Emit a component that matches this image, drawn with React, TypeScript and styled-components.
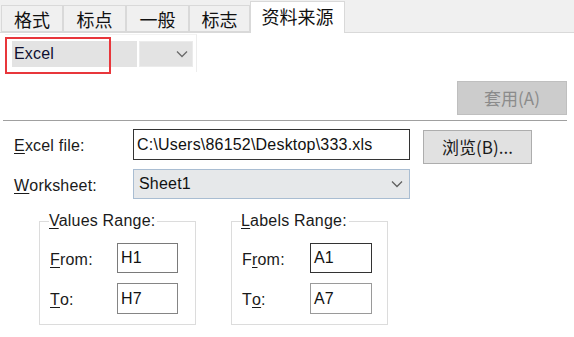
import React from "react";
import styled, { createGlobalStyle } from "styled-components";

const GlobalStyle = createGlobalStyle`
  html, body {
    margin: 0;
    padding: 0;
    background: #ffffff;
  }
  * {
    box-sizing: border-box;
  }
`;

const latin = `"Liberation Sans", "Noto Sans CJK SC", sans-serif`;
const cjk = `"Noto Sans CJK SC", "Liberation Sans", sans-serif`;

const Dialog = styled.div`
  width: 574px;
  height: 337px;
  overflow: hidden;
  background: #ffffff;
  font-family: ${latin};
  font-size: 16px;
  letter-spacing: 0.2px;
  color: #1a1a1a;
`;

const TabBar = styled.div`
  height: 33px;
  display: flex;
  align-items: flex-end;
  padding-left: 1px;
  background: #f0f0f0;
  border-bottom: 1px solid #d9d9d9;
`;

const Tab = styled.div<{ $active?: boolean; $width: number }>`
  width: ${({ $width }) => $width}px;
  height: ${({ $active }) => ($active ? 32 : 27)}px;
  margin-bottom: ${({ $active }) => ($active ? -1 : 0)}px;
  display: flex;
  align-items: center;
  justify-content: center;
  padding-bottom: ${({ $active }) => ($active ? 4 : 0)}px;
  font-family: ${cjk};
  font-size: 18px;
  line-height: 20px;
  letter-spacing: 0;
  color: #111;
  background: ${({ $active }) => ($active ? "#ffffff" : "#f0f0f0")};
  border: 1px solid #d9d9d9;
  border-bottom: ${({ $active }) => ($active ? "none" : "1px solid #d9d9d9")};
  & + & {
    border-left: ${({ $active }) => ($active ? "1px solid #d9d9d9" : "none")};
  }
`;

const SourceFrame = styled.div`
  position: relative;
  margin: 1px 0 0 5px;
  width: 192px;
  height: 38px;
  padding: 6px 0 0 7px;
  display: flex;
  gap: 2px;
  border-right: 1px solid #ededed;
  border-top: 1px solid #f3f3f3;
`;

const SourceValue = styled.div`
  width: 125px;
  height: 26px;
  background: #e3e3e3;
  display: flex;
  align-items: center;
  padding-left: 2px;
  color: #101030;
`;

const SourceArrow = styled.div`
  width: 54px;
  height: 26px;
  background: #e3e3e3;
  border: 1px solid #ebebeb;
  display: flex;
  align-items: center;
  justify-content: flex-end;
  padding-right: 4px;
`;

const Highlight = styled.div`
  position: absolute;
  left: 0;
  top: 2px;
  width: 106px;
  height: 37px;
  border: 2px solid #e8363b;
  pointer-events: none;
`;

const ApplyRow = styled.div`
  display: flex;
  justify-content: flex-end;
  padding-right: 7px;
  margin-top: 9px;
`;

const Button = styled.div<{ $disabled?: boolean; $w: number }>`
  width: ${({ $w }) => $w}px;
  height: 34px;
  display: flex;
  align-items: center;
  justify-content: center;
  font-family: ${cjk};
  font-size: 17px;
  line-height: 20px;
  letter-spacing: 0;
  color: ${({ $disabled }) => ($disabled ? "#8b8b8b" : "#1a1a1a")};
  background: ${({ $disabled }) => ($disabled ? "#cccccc" : "#e1e1e1")};
  border: 1px solid ${({ $disabled }) => ($disabled ? "#bfbfbf" : "#adadad")};
`;

const Separator = styled.div`
  margin: 5px 7px 0 3px;
  height: 2px;
  border-top: 1px solid #a0a0a0;
  border-bottom: 1px solid #ffffff;
`;

const Form = styled.div`
  padding: 7px 0 0 14px;
  display: flex;
  flex-direction: column;
  gap: 5px;
`;

const Row = styled.div`
  display: flex;
  align-items: flex-start;
`;

const Label = styled.div<{ $w: number; $h: number }>`
  width: ${({ $w }) => $w}px;
  height: ${({ $h }) => $h}px;
  display: flex;
  align-items: center;
  padding-top: 3px;
  color: #1a1a1a;
  white-space: nowrap;
`;

const Key = styled.span`
  text-decoration: underline;
  text-underline-offset: 2px;
`;

const TextBox = styled.div<{ $w: number; $h: number; $border: string }>`
  width: ${({ $w }) => $w}px;
  height: ${({ $h }) => $h}px;
  border: 1px solid ${({ $border }) => $border};
  background: #ffffff;
  display: flex;
  align-items: center;
  padding-left: 3px;
  color: #111;
  white-space: nowrap;
  overflow: hidden;
`;

const Select = styled.div`
  width: 277px;
  height: 30px;
  border: 1px solid #a9bdd2;
  background: #e6e8ea;
  display: flex;
  align-items: center;
  justify-content: space-between;
  padding: 0 6px 0 5px;
  color: #111;
`;

const BrowseButton = styled(Button)`
  margin: 1px 0 0 13px;
`;

const Groups = styled.div`
  display: flex;
  gap: 35px;
  margin: 14px 0 0 39px;
`;

const Group = styled.fieldset`
  width: 157px;
  height: 112px;
  margin: 0;
  padding: 14px 0 0 10px;
  border: 1px solid #dcdcdc;
  display: flex;
  flex-direction: column;
  gap: 10px;
`;

const Legend = styled.legend`
  padding: 0 2px 0 0;
  margin-left: -1px;
  line-height: 16px;
  color: #1a1a1a;
`;

const GroupRow = styled.div`
  display: flex;
`;

const Chevron: React.FC<{ color?: string }> = ({ color = "#606060" }) => (
  <svg width="12" height="8" viewBox="0 0 12 8">
    <polyline
      points="1,1.5 6,6.5 11,1.5"
      fill="none"
      stroke={color}
      strokeWidth="1.3"
    />
  </svg>
);

const tabs = [
  { name: "格式", w: 62 },
  { name: "标点", w: 63 },
  { name: "一般", w: 63 },
  { name: "标志", w: 61 },
  { name: "资料来源", w: 95, active: true },
];

export default function App() {
  return (
    <>
      <GlobalStyle />
      <Dialog>
        <TabBar>
          {tabs.map((t) => (
            <Tab key={t.name} $width={t.w} $active={t.active}>
              {t.name}
            </Tab>
          ))}
        </TabBar>

        <SourceFrame>
          <SourceValue>Excel</SourceValue>
          <SourceArrow>
            <Chevron color="#6a6a6a" />
          </SourceArrow>
          <Highlight />
        </SourceFrame>

        <ApplyRow>
          <Button $disabled $w={110}>
            套用(A)
          </Button>
        </ApplyRow>

        <Separator />

        <Form>
          <Row>
            <Label $w={119} $h={31}>
              <Key>E</Key>xcel file:
            </Label>
            <TextBox $w={277} $h={31} $border="#333333">
              C:\Users\86152\Desktop\333.xls
            </TextBox>
            <BrowseButton $w={109}>浏览(B)...</BrowseButton>
          </Row>
          <Row>
            <Label $w={119} $h={30}>
              <Key>W</Key>orksheet:
            </Label>
            <Select>
              <span>Sheet1</span>
              <Chevron />
            </Select>
          </Row>
        </Form>

        <Groups>
          <Group>
            <Legend>
              <Key>V</Key>alues Range:
            </Legend>
            <GroupRow>
              <Label $w={67} $h={30}>
                <Key>F</Key>rom:
              </Label>
              <TextBox $w={61} $h={30} $border="#7a7a7a">
                H1
              </TextBox>
            </GroupRow>
            <GroupRow>
              <Label $w={67} $h={31}>
                <Key>T</Key>o:
              </Label>
              <TextBox $w={61} $h={31} $border="#858585">
                H7
              </TextBox>
            </GroupRow>
          </Group>
          <Group>
            <Legend>
              <Key>L</Key>abels Range:
            </Legend>
            <GroupRow>
              <Label $w={68} $h={30}>
                F<Key>r</Key>om:
              </Label>
              <TextBox $w={62} $h={30} $border="#333333">
                A1
              </TextBox>
            </GroupRow>
            <GroupRow>
              <Label $w={68} $h={31}>
                T<Key>o</Key>:
              </Label>
              <TextBox $w={62} $h={31} $border="#9a9a9a">
                A7
              </TextBox>
            </GroupRow>
          </Group>
        </Groups>
      </Dialog>
    </>
  );
}
